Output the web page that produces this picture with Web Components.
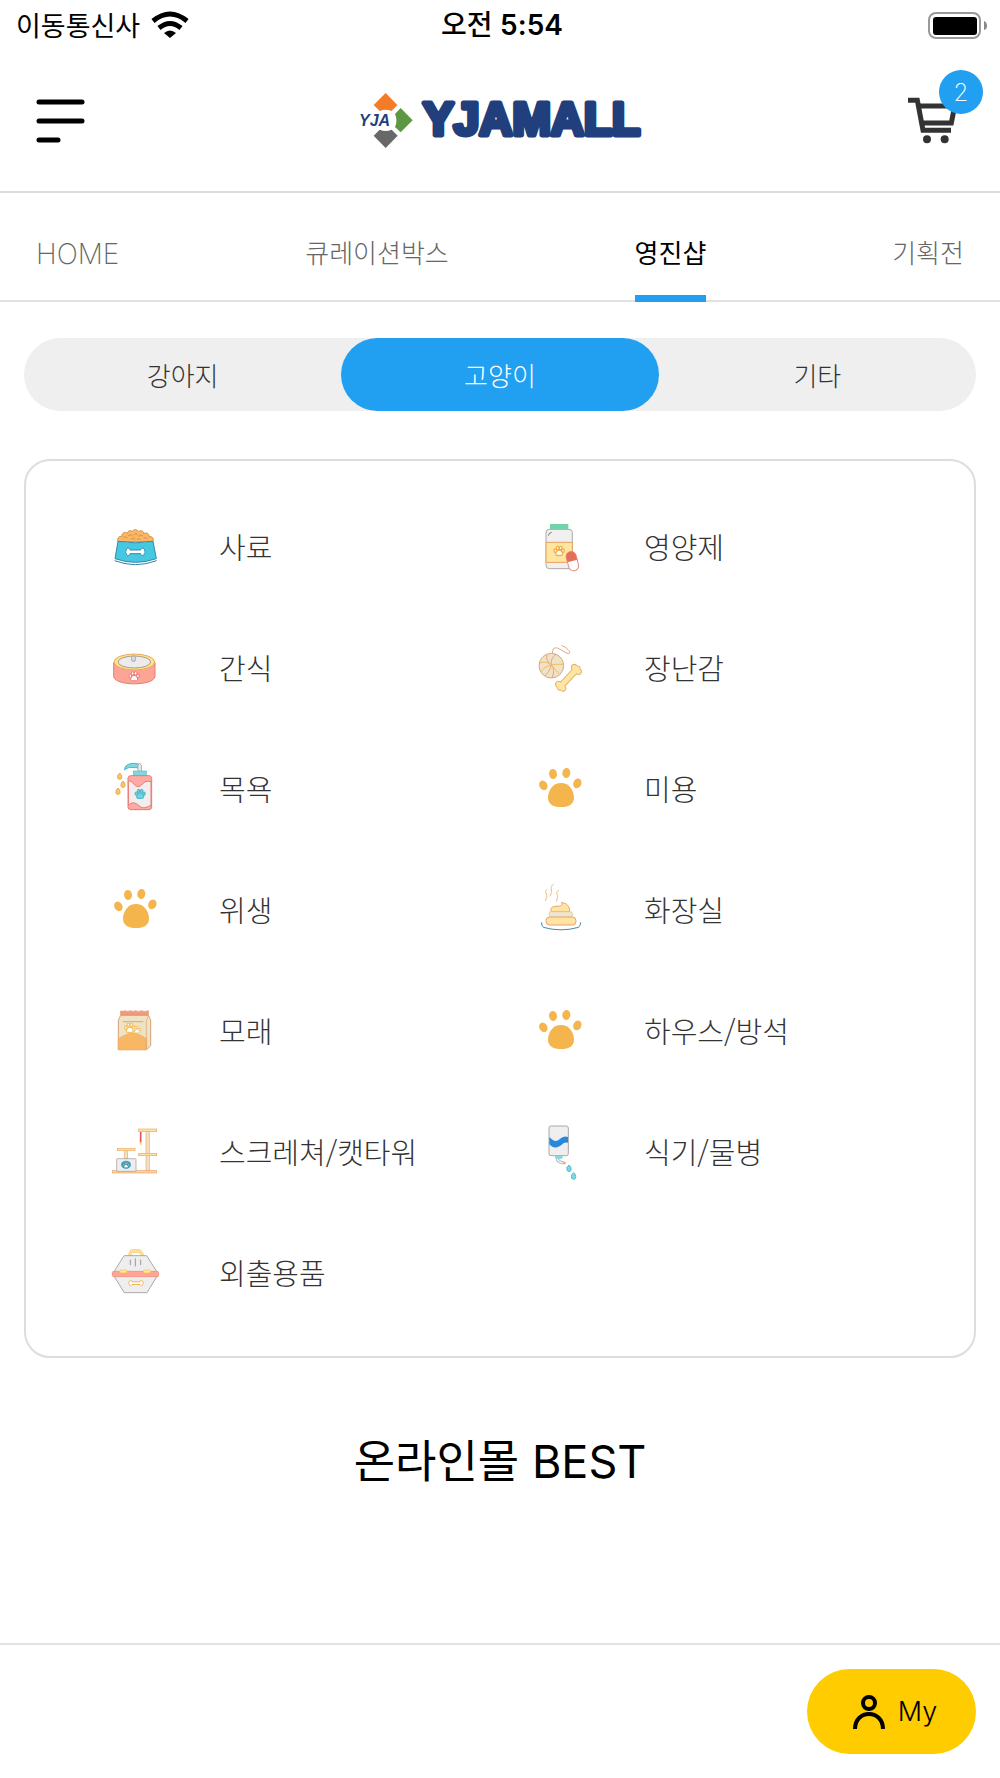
<!DOCTYPE html>
<html lang="ko">
<head>
<meta charset="utf-8">
<meta name="viewport" content="width=device-width, initial-scale=1">
<title>YJAMALL</title>
<style>
  html, body { margin: 0; }
  body {
    min-height: 100vh;
    background: #fff;
    color: #000;
    font-family: "Noto Sans CJK KR", sans-serif;
    font-weight: 300;
    --latin: Inter, "Noto Sans CJK KR", sans-serif;
    --blue: #219ff0;
    --line: #e2e2e2;
  }
</style>
</head>
<body>
<mall-app></mall-app>
<script>
function define(name, html) {
  const template = document.createElement('template');
  template.innerHTML = html;
  customElements.define(name, class extends HTMLElement {
    constructor() {
      super();
      this.attachShadow({ mode: 'open' }).append(template.content.cloneNode(true));
    }
  });
}

/* Icon artwork, keyed by name: [viewBox, shapes] */
const bigPaw = '<g fill="#f4b64c"><ellipse cx="70" cy="826" rx="12" ry="15" transform="rotate(-28 70 826)"/><ellipse cx="99" cy="792" rx="12" ry="15" transform="rotate(-8 99 792)"/><ellipse cx="139" cy="789" rx="12" ry="15" transform="rotate(8 139 789)"/><ellipse cx="172" cy="820" rx="12" ry="15" transform="rotate(24 172 820)"/><path d="M123 819C148 819 162 842 162 863C162 881 148 891 123 891C98 891 84 881 84 863C84 842 98 819 123 819Z"/></g>';
const smallPaw = '<ellipse cx="-11" cy="-2" rx="4" ry="5"/><ellipse cx="-4" cy="-10" rx="4" ry="5"/><ellipse cx="5" cy="-10" rx="4" ry="5"/><ellipse cx="12" cy="-2" rx="4" ry="5"/><path d="M0-4C6-4 10 3 11 7C12 13 5 13 0 12C-5 13-11 13-10 7C-9 3-5-4 0-4Z"/>';
const bone = 'M-16-5C-17-14-29-11-27-4C-30 0-30 3-27 5C-28 13-17 14-16 6H16C17 14 28 13 27 5C30 3 30 0 27-4C29-11 17-14 16-5Z';
const ICONS = {
  food: ['33 36 144 144', `
    <path d="M54 95C50 84 59 76 66 80C63 70 75 63 82 70C84 60 94 60 97 65C99 57 112 57 115 65C122 59 132 63 131 71C140 66 149 72 147 80C158 78 163 88 158 95Z" fill="#fbb766" stroke="#d9903f" stroke-width="3"/>
    <path d="M70 84q6-7 12 0M84 78q7-8 13 0M101 75q6-8 12 0M116 79q7-8 13 0M131 86q6-7 12 0M93 88q7-8 13 0M111 89q6-7 11 0" fill="none" stroke="#d9903f" stroke-width="3"/>
    <path d="M54 94Q106 103 159 94L169 146Q107 168 45 146Z" fill="#45c9e2" stroke="#3489ab" stroke-width="3"/>
    <g transform="translate(106 125)"><path d="${bone}" fill="#fff" stroke="#3489ab" stroke-width="3"/></g>
    <path d="M44 152Q106 176 170 152" fill="none" stroke="#3a7fa6" stroke-width="3"/>`],
  supplement: ['48 36 144 144', `
    <rect x="78" y="58" width="79" height="118" rx="10" fill="#f1eff0" stroke="#aaa" stroke-width="3"/>
    <rect x="90" y="42" width="55" height="16" fill="#75d1a9"/>
    <path d="M85 77Q86 68 95 67" fill="none" stroke="#777" stroke-width="3"/>
    <path d="M78 97H157V157H78Z" fill="#ffe6a0" stroke="#e6a15f" stroke-width="3"/>
    <g transform="translate(117 124)" fill="#fff" stroke="#f0b052" stroke-width="4">${smallPaw}</g>
    <g transform="rotate(-15 157 153)"><rect x="142" y="124" width="30" height="59" rx="15" fill="#fff" stroke="#ec8c7b" stroke-width="3"/><path d="M142 153V139A15 15 0 0 1 172 139V153Z" fill="#e46f59"/></g>`],
  snack: ['33 399 144 144', `
    <path d="M41 458V499C43 529 163 529 165 499V458Z" fill="#fca596" stroke="#ed7970" stroke-width="3"/>
    <ellipse cx="103" cy="456" rx="61" ry="24" fill="#ffe591" stroke="#e5ac58" stroke-width="3"/>
    <ellipse cx="103" cy="456" rx="49" ry="18" fill="#edebec" stroke="#ad9c84" stroke-width="3"/>
    <rect x="95" y="438" width="11" height="16" rx="4" fill="#ddd" stroke="#aaa" stroke-width="3"/>
    <g transform="translate(102 500)" fill="#fff" stroke="#ed7970" stroke-width="3">${smallPaw}</g>`],
  toy: ['48 399 144 144', `
    <path d="M124 406Q135 409 146 421Q155 432 141 430L113 414Q96 410 97 431" fill="none" stroke="#dfac8a" stroke-width="3"/>
    <circle cx="94" cy="467" r="37" fill="#eee3c7" stroke="#dda782" stroke-width="3"/>
    <g fill="none" stroke="#ee9f82" stroke-width="3"><path d="M80 434Q78 454 94 465Q107 480 96 503M108 433Q91 444 94 465Q88 487 75 496"/><path d="M60 458Q86 450 104 476L117 490M63 486Q76 459 130 463" stroke="#f3bb63"/></g>
    <g transform="translate(145 503) rotate(-47) scale(1.6)"><path d="${bone}" fill="#ffe7a1" stroke="#e8b270" stroke-width="2"/></g>`],
  bath: ['33 762 144 144', `
    <path d="M118 763C100 756 72 761 74 780C82 770 97 772 118 774Z" fill="#7fd7e0" stroke="#45b9ca" stroke-width="3"/>
    <path d="M114 784V765Q119 756 124 765V784Z" fill="#eee" stroke="#aaa" stroke-width="3"/>
    <rect x="100" y="783" width="39" height="14" fill="#7fd7e0" stroke="#65bfc9" stroke-width="2"/>
    <rect x="84" y="797" width="71" height="102" rx="8" fill="#fdaba2" stroke="#ed7a74" stroke-width="3"/>
    <path d="M85 814C98 809 99 826 111 829C128 834 126 808 153 815V886C144 889 133 898 121 890C110 881 99 872 86 885Z" fill="#f0eeee" stroke="#ed7a74" stroke-width="3"/>
    <g transform="translate(120 853)" fill="#78d1dd" stroke="#3fb4c5" stroke-width="3">${smallPaw}</g>
    <g fill="#f8c46e" stroke="#eda94c" stroke-width="3"><path d="M59 789L64 795Q68 808 59 808Q50 808 54 795Z"/><path d="M69 813L74 819Q78 832 69 832Q60 832 64 819Z"/><path d="M54 834L59 840Q63 853 54 853Q45 853 49 840Z"/></g>`],
  paw: ['48 762 144 144', bigPaw],
  toilet: ['48 45 144 144', `
    <path d="M82 57C70 66 84 73 80 82L76 93M101 42C87 51 99 61 93 71L90 79M117 60C102 68 116 74 112 84L109 95" fill="none" stroke="#f0bd82" stroke-width="3"/>
    <path d="M93 125C91 114 96 109 108 109C119 109 132 107 124 98C139 98 150 109 149 125Z" fill="#ffe4a2" stroke="#e9a174" stroke-width="3"/>
    <rect x="87" y="125" width="71" height="17" rx="7" fill="#efe5cb" stroke="#e5c390" stroke-width="2"/>
    <rect x="78" y="141" width="90" height="24" rx="11" fill="#ffe4a2" stroke="#e9a174" stroke-width="3"/>
    <path d="M65 157Q64 167 70 172Q123 187 176 172Q181 168 182 157" fill="none" stroke="#4b87a6" stroke-width="3"/>`],
  sand: ['33 408 144 144', `
    <path d="M62 423Q69 426 76 422Q83 427 91 422Q99 427 107 422Q115 427 124 422Q132 427 145 422V436H62Z" fill="#f29b7c" stroke="#ec8466" stroke-width="2"/>
    <path d="M62 436H145L152 449V527L140 539H55V451Z" fill="#efe3c5" stroke="#daa174" stroke-width="3"/>
    <path d="M55 506Q80 491 96 489Q112 488 140 506V539H55Z" fill="#f8b765" stroke="#edac5b" stroke-width="2"/>
    <path d="M68 455H130" stroke="#ee997e" stroke-width="3"/><path d="M145 437L139 453V538" fill="none" stroke="#daa174" stroke-width="2"/>
    <g fill="#fff" stroke="#f3c36b" stroke-width="4"><g transform="translate(89 475)">${smallPaw}</g><g transform="translate(111 480) scale(.75)">${smallPaw}</g></g>`],
  tower: ['33 51 144 144', `
    <g fill="#f4dfbf" stroke="#e3b078" stroke-width="2"><rect x="138" y="64" width="10" height="118"/><rect x="74" y="122" width="9" height="24"/></g>
    <g fill="#ffe29e" stroke="#e9aa67" stroke-width="2"><rect x="116" y="57" width="54" height="8"/><rect x="116" y="130" width="54" height="7"/><rect x="52" y="115" width="53" height="7"/></g>
    <rect x="37" y="182" width="133" height="7" fill="#fed09a" stroke="#eaa56e" stroke-width="2"/>
    <rect x="50" y="146" width="58" height="38" rx="2" fill="#efedee" stroke="#999" stroke-width="2"/>
    <ellipse cx="78" cy="164" rx="15" ry="12" fill="#41a6bb"/><g transform="translate(78 166) scale(.6)" fill="#fff" stroke="#23778e" stroke-width="3">${smallPaw}</g>
    <path d="M122 66V97" stroke="#dc565e" stroke-width="5"/><path d="M122 96V104" stroke="#fac864" stroke-width="5"/>`],
  dispenser: ['48 51 144 144', `
    <rect x="87" y="48" width="58" height="89" rx="6" fill="#f0eeef" stroke="#aaa" stroke-width="3"/>
    <path d="M88 81C101 94 109 97 119 87Q131 76 144 81V98C133 95 128 102 121 107C108 116 96 113 88 103Z" fill="#2788dd"/>
    <path d="M112 144Q112 157 132 159" fill="none" stroke="#aaa" stroke-width="9"/><path d="M112 144Q112 157 132 159" fill="none" stroke="#eee" stroke-width="5"/>
    <path d="M105 138H128V143Q125 148 119 147H113Q107 147 105 143Z" fill="#8bd6df"/><path d="M130 157L137 161" stroke="#f3a655" stroke-width="6"/>
    <g fill="#79d8e7" stroke="#50bfd0" stroke-width="3"><path d="M147 165L152 171Q156 184 147 185Q138 184 141 172Z"/><path d="M161 188L166 194Q170 207 161 208Q152 207 155 195Z"/></g>`],
  carrier: ['33 413 144 144', `
    <path d="M85 436L90 422Q92 418 97 418H118Q123 418 125 423L131 435L124 436L119 426H96L92 436Z" fill="#ffe79c" stroke="#f1bd53" stroke-width="2"/>
    <path d="M72 436H140L175 491L141 547H73L38 491Z" fill="#efeeef" stroke="#aaa" stroke-width="3"/>
    <path d="M91 448V464M106 444V468M122 448V464" stroke="#999" stroke-width="3"/>
    <rect x="37" y="483" width="139" height="16" rx="4" fill="#ffa594" stroke="#f18679" stroke-width="2"/>
    <g fill="#ffe79c" stroke="#efbb54" stroke-width="2"><rect x="59" y="479" width="22" height="9" rx="4"/><rect x="130" y="479" width="22" height="9" rx="4"/></g>
    <g transform="translate(108 518) scale(.75)"><path d="${bone}" fill="#fff" stroke="#f2b552" stroke-width="4"/></g>`]
};

define('status-bar', `
  <style>
    :host { display: grid; grid-template-columns: 1fr auto 1fr; align-items: center; height: 50px; padding: 0 12px 0 16px; box-sizing: border-box; font-size: 27px; line-height: 40px; }
    .network { display: flex; align-items: center; gap: 11px; font-weight: 400; }
    .time { font-family: var(--latin); font-size: 28px; font-weight: 500; }
    .time b { font-weight: 600; }
    .battery { justify-self: end; }
    svg { display: block; }
  </style>
  <div class="network"><span>이동통신사</span>
    <svg width="38" height="28" viewBox="0 0 38 28" fill="none" stroke="#000" stroke-width="5" aria-hidden="true"><path d="M2 10Q19-4 36 10"/><path d="M8 17Q19 8 30 17"/><path d="M13 22Q19 17 25 22L19 27Z" fill="#000" stroke="none"/></svg>
  </div>
  <span class="time">오전 <b>5:54</b></span>
  <svg class="battery" width="60" height="28" viewBox="0 0 60 28" aria-hidden="true"><rect x="1" y="2" width="51" height="25" rx="7" fill="#fff" stroke="#999" stroke-width="2"/><rect x="5" y="6" width="44" height="18" rx="3"/><path d="M56 10Q59 11 59 15Q59 18 56 19Z" fill="#888"/></svg>`);

define('mall-logo', `
  <style>:host { display: block; } svg { display: block; overflow: visible; }</style>
  <svg width="284" height="57" viewBox="0 0 284 57" role="img" aria-label="YJAMALL">
    <g transform="scale(.3333) translate(-54 -36)">
      <path d="M137 39L172 75L155 93Q137 85 119 93L101 75Z" fill="#f47b27"/>
      <path d="M182 84L218 121L182 157L165 141Q174 121 165 102Z" fill="#5e9741"/>
      <path d="M101 154L119 149Q137 157 155 149L173 154L137 204Z" fill="none"/>
      <path d="M101 167L119 149Q137 157 155 149L173 167L137 204Z" fill="#686868"/>
    </g>
    <text x="1" y="34" font-family="Liberation Sans, Arial, sans-serif" font-size="16" font-weight="700" font-style="italic" fill="#213f7d">YJA</text>
    <text x="65" y="43" font-family="Liberation Sans, Arial, sans-serif" font-size="46" font-weight="700" fill="#213f7d" stroke="#213f7d" stroke-width="5" stroke-linejoin="round" stroke-linecap="round">YJAMALL</text>
  </svg>`);

define('mall-header', `
  <style>
    :host { display: grid; grid-template-columns: 1fr auto 1fr; align-items: center; height: 143px; padding: 0 36px; box-sizing: border-box; border-bottom: 2px solid #dcdcdc; }
    button { appearance: none; border: 0; padding: 0; background: none; color: inherit; position: relative; }
    a { color: inherit; text-decoration: none; }
    svg { display: block; }
    .menu { justify-self: start; }
    .cart { justify-self: end; }
    .badge { position: absolute; top: -27px; right: -19px; width: 44px; height: 44px; border-radius: 50%; background: var(--blue); color: #fff; font: 200 24px/46px var(--latin); text-align: center; }
  </style>
  <button class="menu" aria-label="메뉴"><svg width="49" height="46" viewBox="0 0 49 46" stroke="#000" stroke-width="5" stroke-linecap="round"><path d="M3 4H46M3 23H46M3 42H22"/></svg></button>
  <a href="#home"><mall-logo></mall-logo></a>
  <button class="cart" aria-label="장바구니">
    <svg width="56" height="48" viewBox="84 291 168 144" fill="none" stroke="#333" stroke-width="15"><path d="M84 301H112L129 391H213"/><path d="M118 318H224L214 369H126"/><g fill="#333" stroke="none"><circle cx="141" cy="418" r="12"/><circle cx="194" cy="418" r="12"/></g></svg>
    <span class="badge">2</span>
  </button>`);

define('mall-nav', `
  <style>
    :host { display: block; box-shadow: inset 0 -2px var(--line); }
    nav { display: flex; justify-content: space-between; height: 109px; padding: 0 36px; }
  </style>
  <nav><slot></slot></nav>`);

customElements.define('nav-item', class extends HTMLElement {
  connectedCallback() {
    const root = this.attachShadow({ mode: 'open' });
    root.innerHTML = `
      <style>
        :host { display: flex; }
        a { display: flex; align-items: center; padding-top: 20px; border-bottom: 7px solid transparent; color: #666; font-family: var(--latin); font-size: 26px; line-height: 40px; text-decoration: none; white-space: nowrap; }
        :host([lang="en"]) a { font-size: 28px; font-weight: 200; }
        :host([current]) a { color: #000; font-weight: 400; border-color: var(--blue); }
      </style>
      <a href="#"><slot></slot></a>`;
    if (this.hasAttribute('current')) root.querySelector('a').setAttribute('aria-current', 'page');
  }
});

define('pet-tabs', `
  <style>
    :host { display: flex; border-radius: 37px; background: #efefef; }
    button { appearance: none; flex: 1; height: 73px; border: 0; border-radius: 37px; padding: 0; background: transparent; color: #333; font: inherit; font-size: 26px; line-height: 40px; }
    button[aria-pressed="true"] { background: var(--blue); color: #fff; }
  </style>
  <button aria-pressed="false">강아지</button><button aria-pressed="true">고양이</button><button aria-pressed="false">기타</button>`);

customElements.define('category-item', class extends HTMLElement {
  connectedCallback() {
    const [box, art] = ICONS[this.getAttribute('icon')];
    this.attachShadow({ mode: 'open' }).innerHTML = `
      <style>
        :host { display: block; }
        a { display: flex; align-items: center; gap: 60px; height: 121px; padding-left: 36px; color: #333; font-size: 29px; line-height: 40px; text-decoration: none; white-space: nowrap; }
        svg { flex: none; width: 48px; height: 48px; overflow: visible; }
      </style>
      <a href="#"><svg viewBox="${box}" aria-hidden="true">${art}</svg><span><slot></slot></span></a>`;
  }
});

define('category-card', `
  <style>
    :host { display: grid; grid-template-columns: 1fr 1fr; padding: 24px 49px; border: 2px solid #ddd; border-radius: 26px; }
  </style>
  <slot></slot>`);

define('my-bar', `
  <style>
    :host { display: flex; justify-content: flex-end; padding: 24px; border-top: 2px solid var(--line); }
    button { appearance: none; box-sizing: border-box; display: flex; align-items: center; justify-content: center; gap: 12px; width: 169px; height: 85px; border: 0; border-radius: 43px; padding: 0 0 0 6px; background: #fc0; color: #000; font: 300 27px/40px var(--latin); }
  </style>
  <button><svg width="34" height="36" viewBox="0 0 34 36" fill="none" stroke="#000" stroke-width="4" aria-hidden="true"><circle cx="17" cy="9" r="6"/><path d="M3 35C3 15 31 15 31 35"/></svg>My</button>`);

define('mall-app', `
  <style>
    :host { display: flex; flex-direction: column; min-height: 100vh; }
    main { flex: 1; display: flex; flex-direction: column; padding: 36px 24px 0; }
    category-card { margin-top: 48px; }
    h1 { margin: 72px 0 0; font-family: var(--latin); font-size: 45px; line-height: 64px; font-weight: 400; text-align: center; }
  </style>
  <status-bar></status-bar>
  <mall-header></mall-header>
  <mall-nav>
    <nav-item lang="en">HOME</nav-item><nav-item>큐레이션박스</nav-item><nav-item current>영진샵</nav-item><nav-item>기획전</nav-item>
  </mall-nav>
  <main>
    <pet-tabs></pet-tabs>
    <category-card>
      <category-item icon="food">사료</category-item>
      <category-item icon="supplement">영양제</category-item>
      <category-item icon="snack">간식</category-item>
      <category-item icon="toy">장난감</category-item>
      <category-item icon="bath">목욕</category-item>
      <category-item icon="paw">미용</category-item>
      <category-item icon="paw">위생</category-item>
      <category-item icon="toilet">화장실</category-item>
      <category-item icon="sand">모래</category-item>
      <category-item icon="paw">하우스/방석</category-item>
      <category-item icon="tower">스크레쳐/캣타워</category-item>
      <category-item icon="dispenser">식기/물병</category-item>
      <category-item icon="carrier">외출용품</category-item>
    </category-card>
    <h1>온라인몰 BEST</h1>
  </main>
  <my-bar></my-bar>`);
</script>
</body>
</html>
